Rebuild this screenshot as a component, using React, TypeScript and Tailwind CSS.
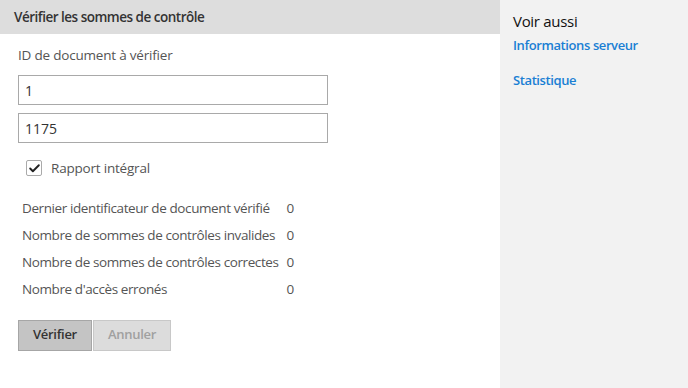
import { Check } from 'lucide-react';

const STATS = [
  { label: 'Dernier identificateur de document vérifié', value: '0' },
  { label: 'Nombre de sommes de contrôles invalides', value: '0' },
  { label: 'Nombre de sommes de contrôles correctes', value: '0' },
  { label: "Nombre d'accès erronés", value: '0' },
];

const input =
  'block h-[30px] w-[310px] border border-[#a9a9a9] bg-white px-[6px] text-[14px] text-[#333] outline-none';

export default function App() {
  return (
    <div
      className="flex h-[388px] w-[688px] bg-white text-[13.5px] text-[#555]"
      style={{ fontFamily: '"Open Sans", "Noto Sans", sans-serif' }}
    >
      <main className="w-[500px]">
        <div className="flex h-[34px] items-center bg-[#dddddd] px-[14px] text-[13.5px] font-semibold tracking-[-0.5px] text-[#333]">
          Vérifier les sommes de contrôle
        </div>

        <div className="px-[18px] pt-[11px]">
          <div className="tracking-[-0.2px]">ID de document à vérifier</div>
          <input className={`${input} mt-[10px]`} defaultValue="1" />
          <input className={`${input} mt-[8px]`} defaultValue="1175" />

          <label className="mt-[15px] ml-[8px] flex items-center gap-[9px] tracking-[-0.2px]">
            <span className="flex h-[16px] w-[16px] items-center justify-center rounded-[2px] border border-[#aaa] bg-white">
              <Check size={13} strokeWidth={3.5} className="text-[#222]" />
            </span>
            Rapport intégral
          </label>

          <div className="mt-[20px] grid w-fit grid-cols-[auto_auto] gap-x-[8px] gap-y-[9px] px-[4px] leading-[18px] tracking-[-0.4px]">
            {STATS.map(s => (
              <div key={s.label} className="contents">
                <span>{s.label}</span>
                <span>{s.value}</span>
              </div>
            ))}
          </div>

          <div className="mt-[22px] flex gap-[1px]">
            <button className="h-[31px] w-[74px] border border-[#a6a6a6] bg-[#c4c4c4] text-[13px] font-semibold tracking-[-0.3px] text-[#333]">
              Vérifier
            </button>
            <button className="h-[31px] w-[78px] border border-[#c8c8c8] bg-[#dcdcdc] text-[13px] font-semibold tracking-[-0.3px] text-[#a0a0a0]">
              Annuler
            </button>
          </div>
        </div>
      </main>

      <aside className="flex-1 bg-[#f2f2f2] px-[13px] pt-[10px]">
        <div className="text-[15px] tracking-[-0.3px] text-[#111]">Voir aussi</div>
        <a className="mt-[3px] block text-[13px] font-semibold tracking-[-0.4px] text-[#1a7fd4]">
          Informations serveur
        </a>
        <a className="mt-[16px] block text-[13px] font-semibold tracking-[-0.4px] text-[#1a7fd4]">
          Statistique
        </a>
      </aside>
    </div>
  );
}
